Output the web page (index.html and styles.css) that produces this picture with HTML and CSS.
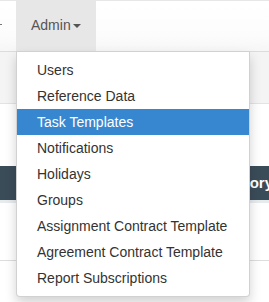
FILE: index.html
```html
<!DOCTYPE html>
<html lang="en">

<head>
    <meta charset="UTF-8">
    <meta name="viewport" content="width=device-width, initial-scale=1.0">
    <title>Admin | Task Templates</title>
    <link rel="stylesheet" href="styles.css">
</head>

<body>
    <nav class="navbar">
        <ul class="nav">
            <li class="nav-prev"><span class="prev-mark"></span></li>
            <li class="nav-item open">
                <a href="#" class="dropdown-toggle">Admin<span class="caret"></span></a>
                <ul class="dropdown-menu">
                    <li><a href="#">Users</a></li>
                    <li><a href="#">Reference Data</a></li>
                    <li class="active"><a href="#">Task Templates</a></li>
                    <li><a href="#">Notifications</a></li>
                    <li><a href="#">Holidays</a></li>
                    <li><a href="#">Groups</a></li>
                    <li><a href="#">Assignment Contract Template</a></li>
                    <li><a href="#">Agreement Contract Template</a></li>
                    <li><a href="#">Report Subscriptions</a></li>
                </ul>
            </li>
        </ul>
    </nav>

    <div class="subbar"></div>

    <div class="content">
        <div class="table-head">
            <span>Template History</span>
        </div>
        <div class="table-row"></div>
        <div class="table-row last"></div>
    </div>
</body>

</html>
```

FILE: styles.css
```css
* {
    margin: 0;
    padding: 0;
    box-sizing: border-box;
}

body {
    font-family: "Liberation Sans", Arial, sans-serif;
    font-size: 14px;
    line-height: 1.42857;
    color: #333;
    background-color: #fff;
    overflow: hidden;
    height: 302px;
}

ul {
    list-style: none;
}

a {
    text-decoration: none;
}

.navbar {
    height: 52px;
    border-top: 1px solid #e7e7e7;
    border-bottom: 1px solid #dcdcdc;
    background-image: linear-gradient(to bottom, #fff 0, #fcfcfc 70%, #f6f6f6 100%);
}

.nav {
    display: flex;
    height: 50px;
}

.nav-prev {
    width: 16px;
    position: relative;
}

.prev-mark {
    display: block;
    width: 2px;
    height: 1px;
    margin-top: 23px;
    background-color: #777;
}

.nav-item {
    position: relative;
}

.dropdown-toggle {
    display: block;
    height: 50px;
    padding: 15px 15px;
    color: #555;
    background-color: #e7e7e7;
}

.caret {
    display: inline-block;
    width: 0;
    height: 0;
    margin-left: 2px;
    vertical-align: middle;
    border-top: 4px solid #555;
    border-left: 4px solid transparent;
    border-right: 4px solid transparent;
}

/* open menu sits over the page below the navbar */
.dropdown-menu {
    position: absolute;
    top: 100%;
    left: 0;
    z-index: 10;
    width: 234px;
    padding: 5px 0;
    background-color: #fff;
    border: 1px solid rgba(0, 0, 0, 0.18);
    border-radius: 0 0 4px 4px;
    box-shadow: 0 6px 12px rgba(0, 0, 0, 0.175);
}

.dropdown-menu a {
    display: block;
    padding: 4px 20px 2px;
    color: #333;
    white-space: nowrap;
}

.dropdown-menu .active a {
    color: #fff;
    background-color: #3787d0;
}

.subbar {
    height: 52px;
    background-color: #f4f4f4;
    border-bottom: 1px solid #e3e3e3;
}

.content {
    padding-top: 62px;
}

.table-head {
    display: flex;
    justify-content: flex-end;
    align-items: center;
    height: 37px;
    margin-right: -4px;
    background-color: #3b4c59;
    color: #fff;
    font-weight: bold;
    font-size: 15px;
    border-bottom: 3px solid #e8ebee;
}

.table-row {
    height: 58px;
    border-bottom: 1px solid #ddd;
}

.table-row.last {
    height: 39px;
    border-bottom: none;
}
```
